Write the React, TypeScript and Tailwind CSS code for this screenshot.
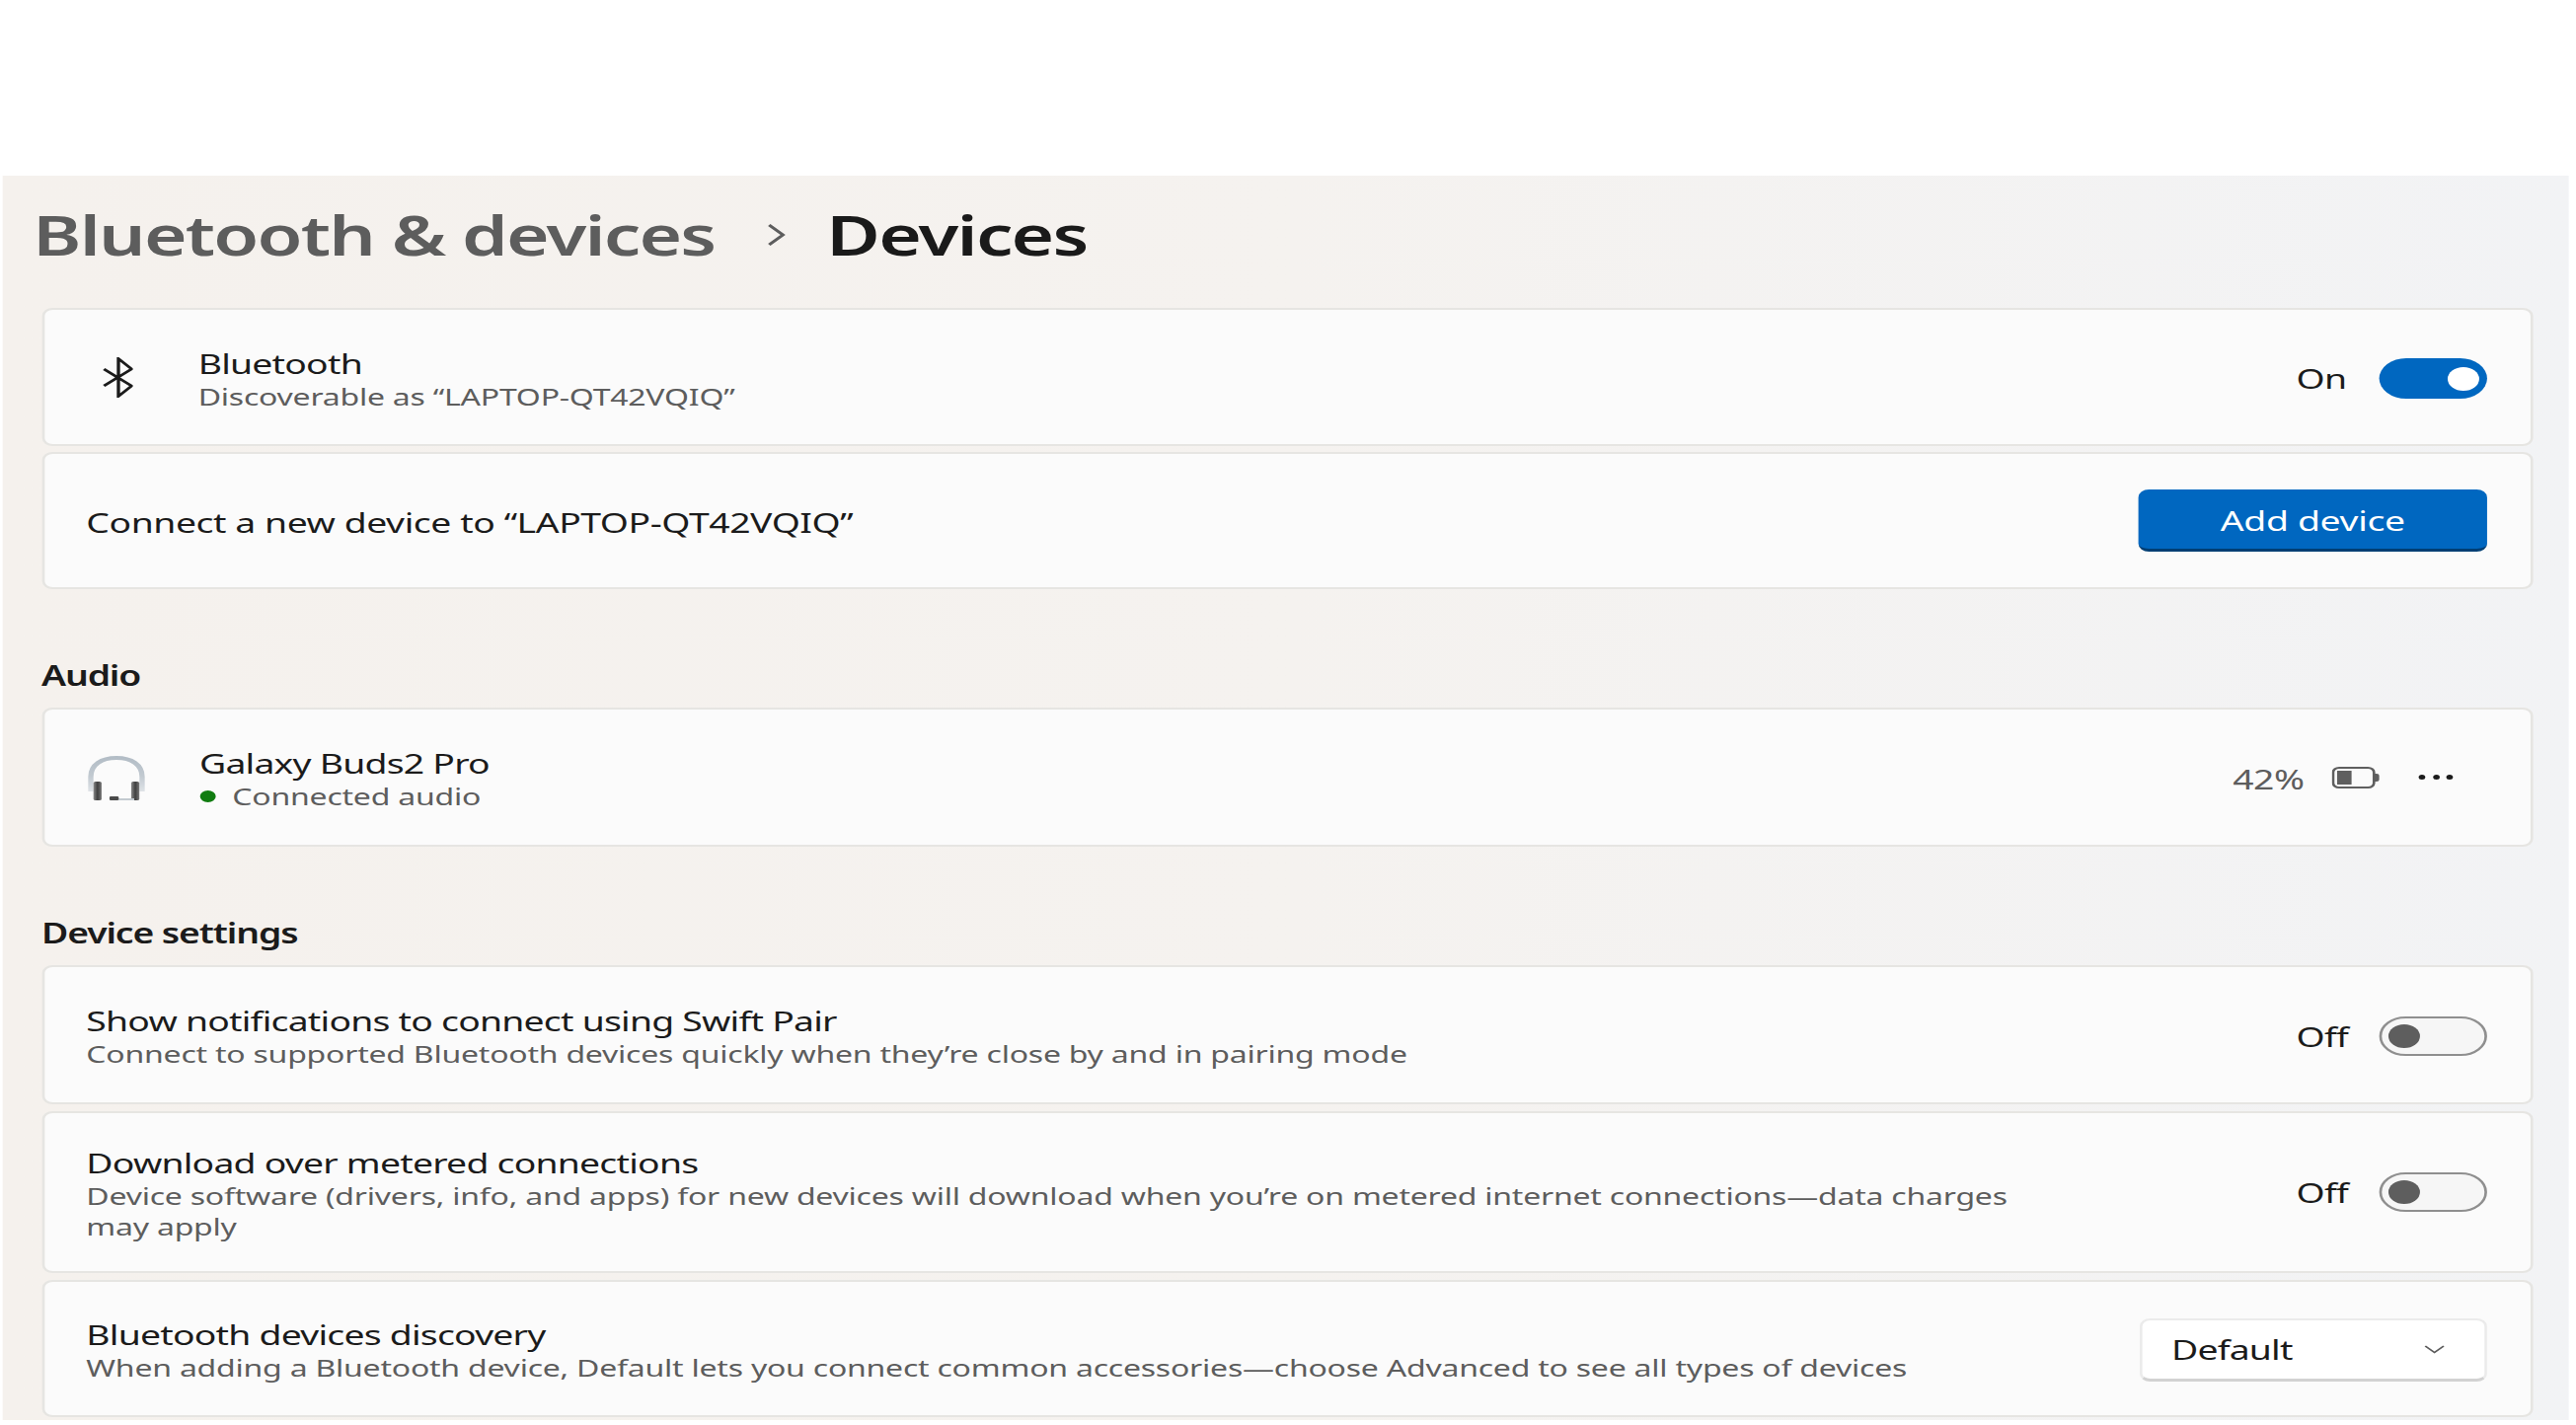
import React from "react";

const font = "font-['Noto_Sans','Open_Sans',sans-serif]";

function Card({ h, children }: { h: string; children: React.ReactNode }) {
  return (
    <div className={`${h} flex items-center rounded-lg border-2 border-[#e6e5e2] bg-[#fbfbfb] pt-[3px] pl-[32px] pr-[33px]`}>
      {children}
    </div>
  );
}

function Title({ children }: { children: React.ReactNode }) {
  return <div className="text-[28px] leading-[35px] tracking-[-0.58px] text-[#1b1b1b]">{children}</div>;
}

function Sub({ children }: { children: React.ReactNode }) {
  return <div className="text-[24px] leading-[31px] tracking-[-0.17px] text-[#5d5d5d]">{children}</div>;
}

function Toggle({ on }: { on: boolean }) {
  const label = <span className="w-[63px] text-[28px] leading-[35px] tracking-[-0.6px] text-[#1b1b1b]">{on ? "On" : "Off"}</span>;
  if (on) {
    return (
      <div className="flex items-center">
        {label}
        <div className="flex h-[41px] w-[82px] items-center justify-end rounded-full bg-[#0067c0] pr-[6px]">
          <div className="h-[24px] w-[24px] rounded-full bg-white" />
        </div>
      </div>
    );
  }
  return (
    <div className="flex items-center">
      {label}
      <div className="flex h-[40px] w-[82px] items-center rounded-full border-2 border-[#8f8f8f] bg-[#f6f6f6] pl-[5px]">
        <div className="h-[24px] w-[24px] rounded-full bg-[#5e5e5e]" />
      </div>
    </div>
  );
}

function BluetoothIcon() {
  return (
    <svg viewBox="0 0 23 41" className="mb-[3px] h-[41px] w-[23px]" fill="none" stroke="#1b1b1b" strokeWidth="2.5">
      <path d="M1 12 22 29 12 39.5V1.5L22 12 1 29" strokeLinejoin="miter" />
    </svg>
  );
}

function HeadphonesIcon() {
  return (
    <svg viewBox="0 0 46 46" className="h-[46px] w-[46px]">
      <defs>
        <linearGradient id="band" x1="0" y1="0" x2="0" y2="1">
          <stop offset="0" stopColor="#b3bdc6" />
          <stop offset="0.55" stopColor="#c2cad1" />
          <stop offset="1" stopColor="#dfe3e7" />
        </linearGradient>
        <linearGradient id="cup" x1="0" y1="0" x2="1" y2="0">
          <stop offset="0" stopColor="#8a8a8a" />
          <stop offset="0.5" stopColor="#3f3f3f" />
          <stop offset="1" stopColor="#777777" />
        </linearGradient>
      </defs>
      <path d="M3 36V21C3 9 11 2 22.5 2S42 9 42 21v15" fill="none" stroke="url(#band)" strokeWidth="4" />
      <rect x="5" y="26" width="6.2" height="19" rx="1.5" fill="url(#cup)" />
      <rect x="33.7" y="26" width="6.2" height="19" rx="1.5" fill="url(#cup)" />
      <rect x="24" y="43" width="12" height="2" fill="#c3cad0" />
      <rect x="17.2" y="41" width="7" height="4" rx="1" fill="#4a4a4a" />
    </svg>
  );
}

function BatteryIcon() {
  return (
    <svg viewBox="0 0 37 22" preserveAspectRatio="none" className="mb-[3px] h-[22px] w-[37px]">
      <rect x="1" y="1" width="31" height="20" rx="4.5" fill="none" stroke="#5f5f5f" strokeWidth="2" />
      <rect x="4" y="4" width="11" height="14" fill="#5f5f5f" />
      <path d="M32 7h2a2 2 0 0 1 2 2v4a2 2 0 0 1-2 2h-2z" fill="#5f5f5f" />
    </svg>
  );
}

function Section({ children }: { children: React.ReactNode }) {
  return (
    <div className="flex h-[120px] items-end pb-[13px] text-[28px] leading-[40px] font-semibold tracking-[-0.85px] text-[#1b1b1b]">
      {children}
    </div>
  );
}

export default function App() {
  return (
    <div className="h-[1444px] w-[2610px] overflow-hidden bg-white">
      <div className={`${font} h-[1444px] w-[1957.5px] origin-top-left scale-x-[1.3333] pt-[178px] pl-[1.5px]`}>
        <main className="h-[1261px] w-[1950.5px] bg-linear-to-r from-[#f5f1ed] via-[#f5f2ef] to-[#f2f3f5] pl-[30px] pr-[27px]">
          <header className="flex h-[134px] items-start pt-[28px] text-[56px] leading-[62px] font-semibold tracking-[-1.35px]">
            <span className="-ml-[6.5px] w-[558px] text-[#5d5d5d]">Bluetooth &amp; devices</span>
            <svg viewBox="0 0 14 24" className="mt-[20px] h-[24px] w-[14px]" fill="none" stroke="#5d5d5d" strokeWidth="2.6">
              <path d="M1.5 2 12 12 1.5 22" />
            </svg>
            <span className="ml-[31px] text-[#1a1a1a]">Devices</span>
          </header>

          <div className="flex flex-col gap-[6px]">
            <Card h="h-[140px]">
              <div className="flex w-[85px] shrink-0 items-center pl-[12px]">
                <BluetoothIcon />
              </div>
              <div className="flex-1">
                <Title>Bluetooth</Title>
                <Sub>Discoverable as “LAPTOP-QT42VQIQ”</Sub>
              </div>
              <Toggle on />
            </Card>
            <Card h="h-[139px]">
              <div className="flex-1 text-[28px] leading-[35px] tracking-[-0.33px] text-[#1b1b1b]">
                Connect a new device to “LAPTOP-QT42VQIQ”
              </div>
              <button className="-mt-[3px] h-[63px] w-[265px] rounded-lg border-b-[3px] border-[#003e73] bg-[#0067c0] pt-[3px] text-[28px] leading-[35px] tracking-[-0.25px] text-white">
                Add device
              </button>
            </Card>
          </div>

          <Section>Audio</Section>
          <Card h="h-[141px]">
            <div className="flex w-[86px] shrink-0 items-center">
              <HeadphonesIcon />
            </div>
            <div className="flex-1">
              <Title>Galaxy Buds2 Pro</Title>
              <div className="flex items-center">
                <div className="mr-[13px] h-[12px] w-[12px] rounded-full bg-[#107c10]" />
                <Sub>Connected audio</Sub>
              </div>
            </div>
            <span className="mr-[21px] text-[28px] leading-[35px] tracking-[-0.33px] text-[#5d5d5d]">42%</span>
            <BatteryIcon />
            <div className="mb-[3px] ml-[29px] mr-[26px] flex w-[26px] items-center justify-between">
              <div className="h-[5px] w-[5px] rounded-full bg-[#1b1b1b]" />
              <div className="h-[5px] w-[5px] rounded-full bg-[#1b1b1b]" />
              <div className="h-[5px] w-[5px] rounded-full bg-[#1b1b1b]" />
            </div>
          </Card>

          <Section>Device settings</Section>
          <div className="flex flex-col gap-[7px]">
            <Card h="h-[141px]">
              <div className="flex-1">
                <Title>Show notifications to connect using Swift Pair</Title>
                <Sub>Connect to supported Bluetooth devices quickly when they’re close by and in pairing mode</Sub>
              </div>
              <Toggle on={false} />
            </Card>
            <Card h="h-[164px]">
              <div className="flex-1">
                <Title>Download over metered connections</Title>
                <div className="max-w-[1475px]">
                  <Sub>
                    Device software (drivers, info, and apps) for new devices will download when you’re on metered
                    internet connections—data charges may apply
                  </Sub>
                </div>
              </div>
              <div className="mb-[3px]">
                <Toggle on={false} />
              </div>
            </Card>
            <Card h="h-[139px]">
              <div className="flex-1">
                <Title>Bluetooth devices discovery</Title>
                <Sub>When adding a Bluetooth device, Default lets you connect common accessories—choose Advanced to see all types of devices</Sub>
              </div>
              <div className="flex h-[64px] w-[264px] items-center justify-between rounded-lg border-2 border-b-[3px] border-[#ebebeb] border-b-[#d2d2d2] bg-white pl-[22px] pr-[30px]">
                <span className="text-[28px] leading-[35px] tracking-[-0.6px] text-[#1b1b1b]">Default</span>
                <svg viewBox="0 0 16 9" className="h-[9px] w-[16px]" fill="none" stroke="#5d5d5d" strokeWidth="1.6">
                  <path d="M1 1l7 6.5L15 1" />
                </svg>
              </div>
            </Card>
          </div>
        </main>
      </div>
    </div>
  );
}
